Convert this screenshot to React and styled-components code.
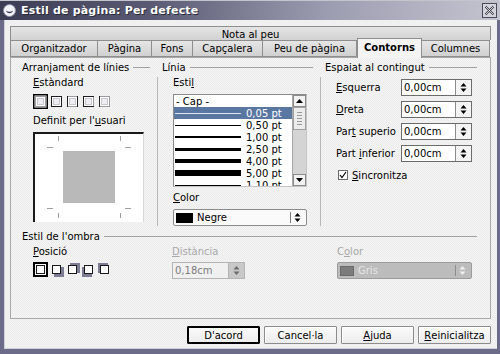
import React from 'react';
import styled, { createGlobalStyle } from 'styled-components';

const GlobalStyle = createGlobalStyle`
  html, body { margin: 0; padding: 0; }
  body {
    font-family: "DejaVu Sans", "Liberation Sans", sans-serif;
    font-size: 10px;
    color: #000;
  }
`;

const Window = styled.div`
  width: 500px;
  height: 354px;
  box-sizing: border-box;
  display: flex;
  flex-direction: column;
  overflow: hidden;
  background: #6c6c8a;
`;

const TitleBar = styled.div`
  height: 20px;
  flex: none;
  display: flex;
  align-items: center;
  gap: 5px;
  padding: 0 3px;
  box-sizing: border-box;
  border-top: 1px solid #c4c4cc;
  background: linear-gradient(to right, #3c3c54 0%, #5a5a74 30%, #9c9cb0 65%, #c4c4d0 100%);
  color: #fff;
`;

const Title = styled.div`
  flex: 1;
  font-weight: bold;
  font-size: 11px;
  letter-spacing: 0.2px;
  text-shadow: 1px 1px 0 #2a2a3a;
`;

const CloseButton = styled.div`
  width: 15px;
  height: 15px;
  box-sizing: border-box;
  border: 1px solid #4a4a5a;
  background: #d4d4dc;
  display: flex;
  align-items: center;
  justify-content: center;
`;

const Frame = styled.div`
  flex: 1;
  display: flex;
  flex-direction: column;
  border-style: solid;
  border-color: #6c6c8a;
  border-width: 0 3px 5px 4px;
  padding: 6px 6px 5px 6px;
  box-shadow: inset 1px 0 #d0d0d8, inset 0 -1px #d0d0d8;
  background: repeating-conic-gradient(#f4f4f4 0 25%, #ececec 0 50%) 0 0 / 2px 2px;
`;

const BackTabRow = styled.div`
  height: 14px;
  flex: none;
  box-sizing: border-box;
  border: 1px solid #8e8e8e;
  border-bottom: none;
  background: linear-gradient(#e4e4e4, #d2d2d2);
  display: flex;
  align-items: center;
  justify-content: center;
  padding-top: 1px;
`;

const FrontTabRow = styled.div`
  height: 17px;
  flex: none;
  display: flex;
  align-items: flex-end;
  position: relative;
  z-index: 1;
`;

const Tab = styled.div`
  width: ${p => p.$w}px;
  height: ${p => (p.$active ? 20 : 17)}px;
  margin-bottom: ${p => (p.$active ? -1 : 0)}px;
  box-sizing: border-box;
  flex: none;
  display: flex;
  align-items: center;
  justify-content: center;
  border: 1px solid #8e8e8e;
  border-bottom: ${p => (p.$active ? 'none' : '1px solid #8e8e8e')};
  border-left-width: ${p => (p.$first || p.$active ? 1 : 0)}px;
  background: ${p => (p.$active ? '#f4f4f4' : 'linear-gradient(#e6e6e6, #d0d0d0)')};
  font-weight: ${p => (p.$active ? 'bold' : 'normal')};
  padding-bottom: ${p => (p.$active ? 2 : 0)}px;
`;

const Panel = styled.div`
  flex: 1;
  box-sizing: border-box;
  border: 1px solid #a8a8a8;
  padding: 3px 0 0 11px;
`;

const TopGrid = styled.div`
  display: grid;
  grid-template-columns: 136px 159px 152px;
  column-gap: 4px;
`;

const Group = styled.div`
  display: flex;
  flex-direction: column;
`;

const GroupTitle = styled.div`
  height: 12px;
  display: flex;
  align-items: center;
  gap: 4px;
  margin-right: ${p => p.$end || 0}px;
  white-space: nowrap;
  &::after {
    content: '';
    flex: 1;
    height: 1px;
    background: #a0a0a0;
  }
`;

const GroupBody = styled.div`
  flex: 1;
  display: flex;
  flex-direction: column;
  align-items: flex-start;
  margin-top: 4px;
  padding-left: ${p => p.$indent}px;
  border-right: ${p => (p.$divider ? '1px solid #b8b8b8' : 'none')};
`;

const Label = styled.div`
  height: 12px;
  line-height: 12px;
  margin-top: ${p => p.$mt || 0}px;
  white-space: nowrap;
  color: ${p => (p.$disabled ? '#a8a8a8' : '#000')};
`;

const Key = styled.span`
  text-decoration: underline;
  text-underline-offset: 1px;
`;

const IconRow = styled.div`
  display: flex;
  gap: 1px;
  margin-top: ${p => p.$mt || 0}px;
  svg { display: block; }
`;

const UserBox = styled.div`
  width: 111px;
  height: 90px;
  margin-top: 5px;
  box-sizing: border-box;
  background: #fff;
  border-top: 2px solid #1a1a1a;
  border-left: 2px solid #1a1a1a;
  border-right: 1px solid #d8d8d8;
  svg { display: block; }
`;

const ListBox = styled.div`
  width: 134px;
  height: 93px;
  margin-top: 5px;
  box-sizing: border-box;
  border: 1px solid #8c8c8c;
  border-right-color: #c4c4c4;
  border-bottom-color: #c4c4c4;
  background: #fff;
  display: flex;
`;

const ListItems = styled.div`
  flex: 1;
  display: flex;
  flex-direction: column;
  overflow: hidden;
`;

const ListItem = styled.div`
  height: 12px;
  flex: none;
  display: flex;
  align-items: center;
  gap: 5px;
  padding-left: 1px;
  background: ${p => (p.$sel ? '#5a77a2' : 'transparent')};
  color: ${p => (p.$sel ? '#fff' : '#000')};
  white-space: nowrap;
`;

const Sample = styled.span`
  width: 66px;
  height: ${p => p.$h}px;
  flex: none;
  background: ${p => (p.$sel ? '#dfe6f0' : '#000')};
`;

const NoneItem = styled.span`
  padding-left: 1px;
`;

const ScrollBar = styled.div`
  width: 13px;
  flex: none;
  display: flex;
  flex-direction: column;
  background: #d4d4d4;
  border-left: 1px solid #a8a8a8;
`;

const ScrollButton = styled.div`
  height: 12px;
  flex: none;
  box-sizing: border-box;
  border: 1px solid #8c8c8c;
  background: #f2f2f2;
  display: flex;
  align-items: center;
  justify-content: center;
  margin-top: ${p => (p.$bottom ? 'auto' : 0)};
`;

const Thumb = styled.div`
  height: 23px;
  box-sizing: border-box;
  border: 1px solid #a0a0a0;
  background: #ececec;
  display: flex;
  align-items: center;
  justify-content: center;
`;

const Grip = styled.div`
  width: 5px;
  height: 13px;
  background: repeating-linear-gradient(#9a9a9a 0 1px, transparent 1px 3px);
`;

const Combo = styled.div`
  width: ${p => p.$w}px;
  height: 17px;
  margin-top: ${p => p.$mt || 0}px;
  box-sizing: border-box;
  border: 1px solid ${p => (p.$disabled ? '#9c9c9c' : '#8c8c8c')};
  border-radius: 2px;
  background: ${p => (p.$disabled ? '#bcbcbc' : '#fafafa')};
  color: ${p => (p.$disabled ? '#e6e6e6' : '#000')};
  display: flex;
  align-items: center;
  padding-left: 2px;
  gap: 4px;
`;

const Swatch = styled.span`
  width: ${p => p.$w}px;
  height: 10px;
  flex: none;
  background: ${p => p.$color};
  border: 1px solid ${p => (p.$disabled ? '#6a6a6a' : '#000')};
  box-sizing: border-box;
`;

const ComboText = styled.span`
  flex: 1;
`;

const ComboArrows = styled.span`
  width: 13px;
  height: 11px;
  flex: none;
  border-left: 1px solid ${p => (p.$disabled ? '#8c8c8c' : '#7c7c7c')};
  display: flex;
  align-items: center;
  justify-content: center;
  margin-right: 2px;
`;

const SpacingGrid = styled.div`
  display: grid;
  grid-template-columns: 65px 71px;
  row-gap: 5px;
  margin-top: 2px;
  align-items: center;
`;

const Spin = styled.div`
  width: ${p => p.$w || 71}px;
  height: 17px;
  margin-top: ${p => p.$mt || 0}px;
  box-sizing: border-box;
  display: flex;
  border: 1px solid ${p => (p.$disabled ? '#b4b4b4' : '#6c6c6c')};
  background: ${p => (p.$disabled ? '#f0f0f0' : '#fff')};
  color: ${p => (p.$disabled ? '#7c7c7c' : '#000')};
`;

const SpinText = styled.span`
  flex: 1;
  display: flex;
  align-items: center;
  padding-left: 2px;
`;

const SpinButtons = styled.span`
  width: 15px;
  flex: none;
  border-left: 1px solid ${p => (p.$disabled ? '#b4b4b4' : '#8c8c8c')};
  background: ${p => (p.$disabled ? '#c8c8c8' : '#f4f4f4')};
  display: flex;
  align-items: center;
  justify-content: center;
`;

const CheckRow = styled.div`
  display: flex;
  align-items: center;
  gap: 4px;
  height: 12px;
  margin: 7px 0 0 2px;
`;

const CheckBox = styled.span`
  width: 10px;
  height: 10px;
  box-sizing: border-box;
  border: 1px solid #6c6c6c;
  background: #fff;
  display: flex;
  align-items: center;
  justify-content: center;
`;

const ShadowSection = styled.div`
  margin-top: 4px;
  width: 455px;
`;

const ShadowGrid = styled.div`
  display: grid;
  grid-template-columns: 136px 159px 152px;
  column-gap: 4px;
  margin-top: 4px;
`;

const ShadowCell = styled.div`
  padding-left: ${p => p.$indent}px;
  display: flex;
  flex-direction: column;
  align-items: flex-start;
`;

const ButtonRow = styled.div`
  display: flex;
  justify-content: flex-end;
  gap: 4px;
  margin-top: 7px;
  flex: none;
`;

const Button = styled.div`
  width: 73px;
  height: 18px;
  box-sizing: border-box;
  display: flex;
  align-items: center;
  justify-content: center;
  border: 1px solid ${p => (p.$default ? '#000' : '#8c8c8c')};
  box-shadow: ${p => (p.$default ? 'inset 0 0 0 1px #000' : 'inset 1px 1px 0 #fff')};
  border-radius: 1px;
  background: linear-gradient(#fbfbfb, #ececec);
`;

function AppIcon() {
  return (
    <svg width="13" height="13" viewBox="0 0 13 13">
      <circle cx="6.5" cy="6.5" r="6" fill="#f4f4f8" stroke="#8a8aa0" />
      <path d="M3 6.5 A3.6 3.6 0 0 0 10 6.5 A4.4 3 0 0 1 3 6.5Z" fill="#3a3a58" />
    </svg>
  );
}

function UpDown({ color = '#000' }) {
  return (
    <svg width="7" height="11" viewBox="0 0 7 11">
      <path d="M0.5 4.5 L3.5 1 L6.5 4.5Z M0.5 6.5 L3.5 10 L6.5 6.5Z" fill={color} />
    </svg>
  );
}

function PresetIcon({ sides, selected }) {
  const dark = '#1e1e1e';
  return (
    <svg width="15" height="15" viewBox="0 0 15 15">
      {selected && <rect x="0.75" y="0.75" width="13.5" height="13.5" fill="#fff" stroke="#000" strokeWidth="1.5" />}
      <rect x="2.5" y="2.5" width="10" height="10" fill="#fff" stroke="#9c9c9c" />
      <rect x="4.5" y="4.5" width="6" height="6" fill="#eeeef2" stroke="#c8c8d4" />
      {sides.includes('t') && <line x1="2" y1="2.5" x2="13" y2="2.5" stroke={dark} />}
      {sides.includes('b') && <line x1="2" y1="12.5" x2="13" y2="12.5" stroke={dark} />}
      {sides.includes('l') && <line x1="2.5" y1="2" x2="2.5" y2="13" stroke={dark} />}
      {sides.includes('r') && <line x1="12.5" y1="2" x2="12.5" y2="13" stroke={dark} />}
    </svg>
  );
}

function ShadowIcon({ dx, dy, selected }) {
  return (
    <svg width="15" height="15" viewBox="0 0 15 15">
      {selected && (
        <>
          <rect x="0.5" y="0.5" width="14" height="14" fill="#fff" stroke="#000" />
          <rect x="1.5" y="1.5" width="12" height="12" fill="none" stroke="#000" />
        </>
      )}
      {(dx || dy) ? <rect x={3 + dx} y={3 + dy} width="10" height="10" fill="#7c7c94" /> : null}
      <rect x="3.5" y="3.5" width="8" height="8" fill="#fff" stroke="#1a1a1a" />
    </svg>
  );
}

function UserPreview() {
  const tick = '#a0a0a0';
  return (
    <svg width="108" height="88" viewBox="0 0 108 88">
      <rect x="28" y="17" width="52" height="52" fill="#b9b9b9" />
      <g stroke={tick} strokeWidth="1">
        <line x1="23.5" y1="2" x2="23.5" y2="7" />
        <line x1="85.5" y1="2" x2="85.5" y2="7" />
        <line x1="23.5" y1="79" x2="23.5" y2="84" />
        <line x1="85.5" y1="79" x2="85.5" y2="84" />
        <line x1="12" y1="13.5" x2="18" y2="13.5" />
        <line x1="90" y1="13.5" x2="96" y2="13.5" />
        <line x1="12" y1="74.5" x2="18" y2="74.5" />
        <line x1="90" y1="74.5" x2="96" y2="74.5" />
      </g>
    </svg>
  );
}

const tabs = [
  { label: 'Organitzador', w: 88 },
  { label: 'Pàgina', w: 54 },
  { label: 'Fons', w: 41 },
  { label: 'Capçalera', w: 70 },
  { label: 'Peu de pàgina', w: 94 },
  { label: 'Contorns', w: 65, active: true },
  { label: 'Columnes', w: 68 },
];

const lineStyles = [
  { label: '0,05 pt', h: 1, sel: true },
  { label: '0,50 pt', h: 1 },
  { label: '1,00 pt', h: 2 },
  { label: '2,50 pt', h: 3 },
  { label: '4,00 pt', h: 4 },
  { label: '5,00 pt', h: 6 },
  { label: '1,10 pt', h: 1 },
];

const presets = [[], ['t', 'r', 'b', 'l'], ['l', 'r'], ['t', 'b', 'l'], ['l']];
const shadows = [[0, 0], [2, 2], [2, -2], [-2, 2], [-2, -2]];

const spacing = [
  [<><Key>E</Key>squerra</>],
  [<><Key>D</Key>reta</>],
  [<>Par<Key>t</Key> superio</>],
  [<>Part <Key>i</Key>nferior</>],
];

export default function App() {
  return (
    <>
      <GlobalStyle />
      <Window>
        <TitleBar>
          <AppIcon />
          <Title>Estil de pàgina: Per defecte</Title>
          <CloseButton>
            <svg width="11" height="11" viewBox="0 0 11 11">
              <path d="M1.5 1.5 L9.5 9.5 M9.5 1.5 L1.5 9.5" stroke="#3a3a4a" strokeWidth="2" />
              <path d="M1.5 1.5 L9.5 9.5 M9.5 1.5 L1.5 9.5" stroke="#f4f4f8" strokeWidth="0.8" />
            </svg>
          </CloseButton>
        </TitleBar>
        <Frame>
          <BackTabRow>Nota al peu</BackTabRow>
          <FrontTabRow>
            {tabs.map((t, i) => (
              <Tab key={t.label} $w={t.w} $active={t.active} $first={i === 0}>
                {t.label}
              </Tab>
            ))}
          </FrontTabRow>
          <Panel>
            <TopGrid>
              <Group>
                <GroupTitle $end={8}>Arranjament de línies</GroupTitle>
                <GroupBody $indent={11} $divider>
                  <Label><Key>E</Key>stàndard</Label>
                  <IconRow $mt={5}>
                    {presets.map((s, i) => (
                      <PresetIcon key={i} sides={s} selected={i === 0} />
                    ))}
                  </IconRow>
                  <Label $mt={6}>Definit per l'<Key>u</Key>suari</Label>
                  <UserBox>
                    <UserPreview />
                  </UserBox>
                </GroupBody>
              </Group>
              <Group>
                <GroupTitle $end={8}>Línia</GroupTitle>
                <GroupBody $indent={11} $divider>
                  <Label>Esti<Key>l</Key></Label>
                  <ListBox>
                    <ListItems>
                      <ListItem><NoneItem>- Cap -</NoneItem></ListItem>
                      {lineStyles.map(l => (
                        <ListItem key={l.label} $sel={l.sel}>
                          <Sample $h={l.h} $sel={l.sel} />
                          {l.label}
                        </ListItem>
                      ))}
                    </ListItems>
                    <ScrollBar>
                      <ScrollButton>
                        <svg width="7" height="4" viewBox="0 0 7 4"><path d="M0 4 L3.5 0 L7 4Z" fill="#000" /></svg>
                      </ScrollButton>
                      <Thumb><Grip /></Thumb>
                      <ScrollButton $bottom>
                        <svg width="7" height="4" viewBox="0 0 7 4"><path d="M0 0 L3.5 4 L7 0Z" fill="#000" /></svg>
                      </ScrollButton>
                    </ScrollBar>
                  </ListBox>
                  <Label $mt={5}><Key>C</Key>olor</Label>
                  <Combo $w={134} $mt={5}>
                    <Swatch $w={17} $color="#000" />
                    <ComboText>Negre</ComboText>
                    <ComboArrows><UpDown /></ComboArrows>
                  </Combo>
                </GroupBody>
              </Group>
              <Group>
                <GroupTitle>Espaiat al contingut</GroupTitle>
                <GroupBody $indent={11}>
                  <SpacingGrid>
                    {spacing.map(([label], i) => (
                      <React.Fragment key={i}>
                        <Label>{label}</Label>
                        <Spin>
                          <SpinText>0,00cm</SpinText>
                          <SpinButtons><UpDown /></SpinButtons>
                        </Spin>
                      </React.Fragment>
                    ))}
                  </SpacingGrid>
                  <CheckRow>
                    <CheckBox>
                      <svg width="8" height="8" viewBox="0 0 8 8">
                        <path d="M1 4 L3 6.5 L7 1" fill="none" stroke="#000" strokeWidth="1.2" />
                      </svg>
                    </CheckBox>
                    <span><Key>S</Key>incronitza</span>
                  </CheckRow>
                </GroupBody>
              </Group>
            </TopGrid>
            <ShadowSection>
              <GroupTitle>Estil de l'ombra</GroupTitle>
              <ShadowGrid>
                <ShadowCell $indent={11}>
                  <Label><Key>P</Key>osició</Label>
                  <IconRow $mt={4}>
                    {shadows.map(([dx, dy], i) => (
                      <ShadowIcon key={i} dx={dx} dy={dy} selected={i === 0} />
                    ))}
                  </IconRow>
                </ShadowCell>
                <ShadowCell $indent={10}>
                  <Label $disabled><Key>D</Key>istància</Label>
                  <Spin $w={73} $mt={4} $disabled>
                    <SpinText>0,18cm</SpinText>
                    <SpinButtons $disabled><UpDown color="#6c6c6c" /></SpinButtons>
                  </Spin>
                </ShadowCell>
                <ShadowCell $indent={12}>
                  <Label $disabled>C<Key>o</Key>lor</Label>
                  <Combo $w={135} $mt={4} $disabled>
                    <Swatch $w={14} $color="#7c7c7c" $disabled />
                    <ComboText>Gris</ComboText>
                    <ComboArrows $disabled><UpDown color="#f0f0f0" /></ComboArrows>
                  </Combo>
                </ShadowCell>
              </ShadowGrid>
            </ShadowSection>
          </Panel>
          <ButtonRow>
            <Button $default>D'acord</Button>
            <Button>Cancel·la</Button>
            <Button><Key>A</Key>juda</Button>
            <Button><Key>R</Key>einicialitza</Button>
          </ButtonRow>
        </Frame>
      </Window>
    </>
  );
}
